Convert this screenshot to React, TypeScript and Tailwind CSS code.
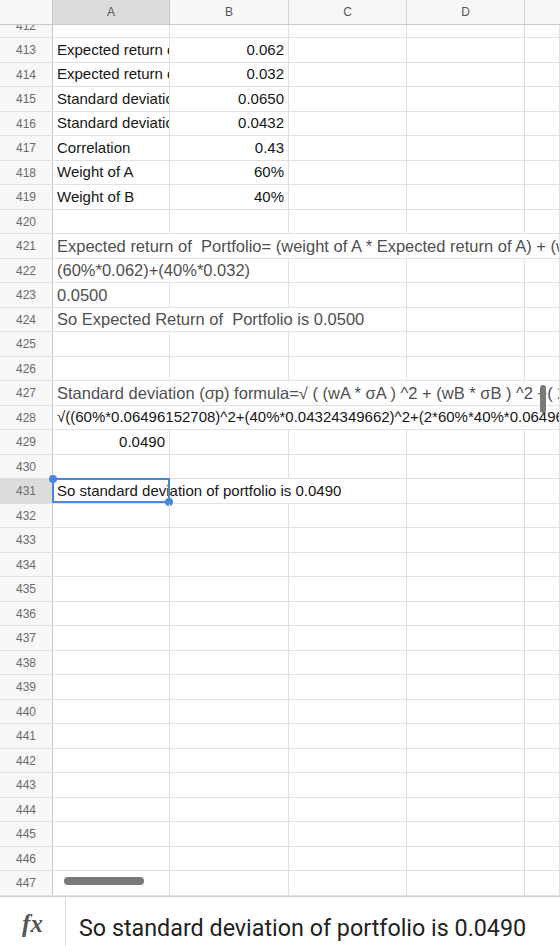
import React from "react";

type Cell = {
  span: number; // number of columns covered, 0 = run to the right edge
  text?: string;
  align?: "left" | "right";
  tone?: "ink" | "soft";
  size?: "md" | "lg";
};

const COL_W = [117, 119, 118, 118];

const base = (): Cell[] => [{ span: 1 }, { span: 1 }, { span: 1 }, { span: 1 }, { span: 0 }];

const rows: { n: number; cells: Cell[] }[] = [];

const labelRow = (n: number, a: string, b: string) => ({
  n,
  cells: [
    { span: 1, text: a, tone: "ink" as const, size: "md" as const },
    { span: 1, text: b, align: "right" as const, tone: "ink" as const, size: "md" as const },
    { span: 1 },
    { span: 1 },
    { span: 0 },
  ],
});

rows.push(labelRow(413, "Expected return of A", "0.062"));
rows.push(labelRow(414, "Expected return of B", "0.032"));
rows.push(labelRow(415, "Standard deviation of A", "0.0650"));
rows.push(labelRow(416, "Standard deviation of B", "0.0432"));
rows.push(labelRow(417, "Correlation", "0.43"));
rows.push(labelRow(418, "Weight of A", "60%"));
rows.push(labelRow(419, "Weight of B", "40%"));
rows.push({ n: 420, cells: base() });
rows.push({
  n: 421,
  cells: [
    {
      span: 0,
      text: "Expected return of  Portfolio= (weight of A * Expected return of A) + (weight of B * Expected return of B)",
      tone: "soft",
      size: "lg",
    },
  ],
});
rows.push({
  n: 422,
  cells: [
    { span: 2, text: "(60%*0.062)+(40%*0.032)", tone: "soft", size: "lg" },
    { span: 1 },
    { span: 1 },
    { span: 0 },
  ],
});
rows.push({
  n: 423,
  cells: [
    { span: 1, text: "0.0500", tone: "soft", size: "lg" },
    { span: 1 },
    { span: 1 },
    { span: 1 },
    { span: 0 },
  ],
});
rows.push({
  n: 424,
  cells: [
    { span: 3, text: "So Expected Return of  Portfolio is 0.0500", tone: "soft", size: "lg" },
    { span: 1 },
    { span: 0 },
  ],
});
rows.push({ n: 425, cells: base() });
rows.push({ n: 426, cells: base() });
rows.push({
  n: 427,
  cells: [
    {
      span: 0,
      text: "Standard deviation (σp) formula=√ ( (wA * σA ) ^2 + (wB * σB ) ^2 +( 2 * wA * wB * σA * σB * ρ ) )",
      tone: "soft",
      size: "lg",
    },
  ],
});
rows.push({
  n: 428,
  cells: [
    {
      span: 0,
      text: "√((60%*0.06496152708)^2+(40%*0.04324349662)^2+(2*60%*40%*0.06496152708*0.04324349662*0.43))",
      tone: "ink",
      size: "md",
    },
  ],
});
rows.push({
  n: 429,
  cells: [
    { span: 1, text: "0.0490", align: "right", tone: "ink", size: "md" },
    { span: 1 },
    { span: 1 },
    { span: 1 },
    { span: 0 },
  ],
});
rows.push({ n: 430, cells: base() });
rows.push({
  n: 431,
  cells: [
    { span: 3, text: "So standard deviation of portfolio is 0.0490", tone: "ink", size: "md" },
    { span: 1 },
    { span: 0 },
  ],
});
for (let n = 432; n <= 447; n++) rows.push({ n, cells: base() });

const font = { fontFamily: '"Liberation Sans", Arial, sans-serif' };

function GridRow({ n, cells, active }: { n: number; cells: Cell[]; active?: boolean }) {
  let col = 0;
  return (
    <div className="flex h-[24.5px] shrink-0 border-b border-[#e1e1e1]">
      <div
        className={`flex w-[53px] shrink-0 items-center justify-center border-r border-[#c9c9c9] text-[12px] text-[#6b6b6b] ${
          active ? "bg-[#dcdcdc]" : "bg-[#f7f7f7]"
        }`}
      >
        {n}
      </div>
      {cells.map((c, i) => {
        const start = col;
        let width: number | undefined;
        if (c.span > 0) {
          width = COL_W.slice(start, start + c.span).reduce((s, w) => s + w, 0);
          col += c.span;
        } else {
          col = COL_W.length + 1;
        }
        const isSelected = active && start === 0;
        const right = c.align === "right";
        return (
          <div
            key={i}
            className={`relative flex items-center border-r border-[#e1e1e1] ${
              c.span === 0 ? "min-w-0 flex-1" : "shrink-0"
            } ${right ? "justify-end pr-[4px]" : "justify-start pl-[4px]"} ${
              c.tone === "soft" ? "text-[#4f4f4f]" : "text-[#161616]"
            } ${c.size === "lg" ? "text-[16.5px]" : "text-[15px]"}`}
            style={width !== undefined ? { width } : undefined}
          >
            <span className={`block min-w-0 overflow-hidden whitespace-pre ${right ? "" : "flex-1"}`}>{c.text}</span>
            {isSelected && (
              <div className="pointer-events-none absolute left-[-1px] top-[-1px] h-[25px] w-[118px] border-2 border-[#4a86e0]">
                <div className="absolute left-[-5px] top-[-5px] h-[8px] w-[8px] rounded-full bg-[#4a86e0]" />
                <div className="absolute bottom-[-5px] right-[-5px] h-[8px] w-[8px] rounded-full bg-[#4a86e0]" />
              </div>
            )}
          </div>
        );
      })}
    </div>
  );
}

export default function App() {
  return (
    <div className="flex h-[946px] w-[560px] flex-col overflow-hidden bg-white" style={font}>
      <div className="relative flex min-h-0 flex-1 flex-col overflow-hidden">
        {/* column letters */}
        <div className="flex h-[25px] shrink-0 border-b border-[#c9c9c9] bg-[#f7f7f7] text-[12px] text-[#555]">
          <div className="w-[53px] shrink-0 border-r border-[#c9c9c9]" />
          <div className="flex w-[117px] shrink-0 items-center justify-center border-r border-[#c9c9c9] bg-[#dcdcdc]">A</div>
          <div className="flex w-[119px] shrink-0 items-center justify-center border-r border-[#d6d6d6]">B</div>
          <div className="flex w-[118px] shrink-0 items-center justify-center border-r border-[#d6d6d6]">C</div>
          <div className="flex w-[118px] shrink-0 items-center justify-center border-r border-[#d6d6d6]">D</div>
          <div className="flex-1" />
        </div>

        {/* partially scrolled row */}
        <div className="h-[13.3px] shrink-0 overflow-hidden">
          <div className="mt-[-11.2px]">
            <GridRow n={412} cells={base()} />
          </div>
        </div>

        {rows.map((r) => (
          <GridRow key={r.n} n={r.n} cells={r.cells} active={r.n === 431} />
        ))}

        {/* scroll thumbs */}
        <div className="absolute left-[64px] top-[877px] h-[8px] w-[80px] rounded-full bg-[#7a7a7a]" />
        <div className="absolute left-[540px] top-[385px] h-[28px] w-[6px] rounded-[3px] bg-[#7a7a7a]" />
      </div>

      {/* formula bar */}
      <div className="flex h-[50px] shrink-0 border-t border-[#cfcfcf] bg-white">
        <div className="flex w-[66px] shrink-0 items-start justify-center border-r border-[#dcdcdc] pt-[14px]">
          <span
            className="text-[25px] font-bold italic leading-none text-[#555]"
            style={{ fontFamily: '"Liberation Serif", "Times New Roman", serif' }}
          >
            fx
          </span>
        </div>
        <div
          className="flex-1 whitespace-nowrap pl-[13px] pt-[19px] text-[23.3px] leading-[24px] text-[#222]"
          style={{ fontFamily: "Roboto, sans-serif" }}
        >
          So standard deviation of portfolio is 0.0490
        </div>
      </div>
    </div>
  );
}
